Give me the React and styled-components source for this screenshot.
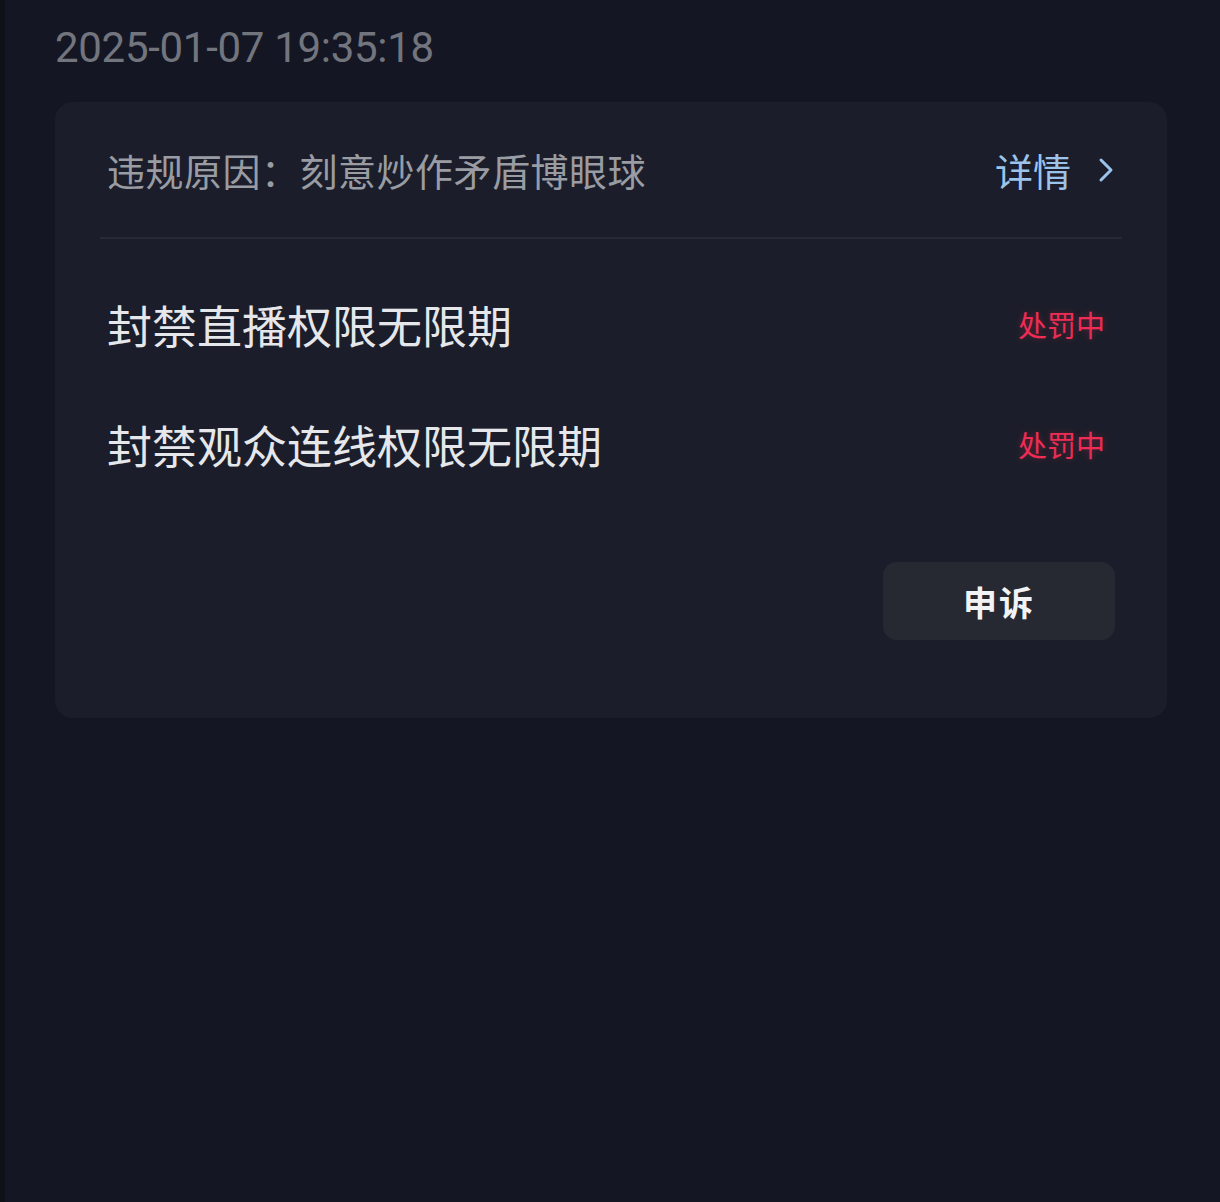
import React from "react";
import styled, { createGlobalStyle } from "styled-components";

const Global = createGlobalStyle`
  html, body { margin: 0; padding: 0; background: #141723; }
  body { font-family: "Noto Sans CJK SC", "Noto Sans", sans-serif; }
`;

const Page = styled.div`
  min-height: 1202px;
  background: #141723;
  border-left: 5px solid #0f1119;
  box-sizing: border-box;
  padding: 22px 53px 0 50px;
`;

const Time = styled.div`
  font-family: Roboto, "Liberation Sans", sans-serif;
  font-size: 42px;
  line-height: 52px;
  color: #72757e;
  letter-spacing: -0.3px;
  margin-bottom: 28px;
`;

const Card = styled.div`
  background: #1b1e2a;
  border-radius: 18px;
  padding: 0 45px 78px 45px;
  display: flex;
  flex-direction: column;
`;

const ReasonRow = styled.div`
  height: 135px;
  display: flex;
  align-items: center;
  justify-content: space-between;
  padding: 0 8px 0 7px;
  border-bottom: 2px solid #272a35;
`;

const Reason = styled.div`
  font-size: 38px;
  color: #9a9ca3;
  letter-spacing: 0.5px;
`;

const Detail = styled.div`
  display: flex;
  align-items: center;
  gap: 27px;
  font-size: 38px;
  color: #9cc3ea;
`;

const Rows = styled.div`
  display: flex;
  flex-direction: column;
  padding: 40px 17px 0 7px;
  gap: 30px;
`;

const Row = styled.div`
  height: 90px;
  display: flex;
  align-items: center;
  justify-content: space-between;
`;

const Title = styled.div`
  font-size: 45px;
  color: #e6e7ea;
`;

const Badge = styled.div`
  font-size: 29px;
  color: #ef2c53;
  font-weight: 400;
  text-shadow: 0 0 6px rgba(239, 44, 83, 0.35);
`;

const Actions = styled.div`
  display: flex;
  justify-content: flex-end;
  padding: 73px 7px 0 0;
`;

const Button = styled.button`
  width: 232px;
  height: 78px;
  border: none;
  border-radius: 14px;
  background: #262932;
  color: #f2f3f5;
  font-family: "Noto Sans CJK SC", sans-serif;
  font-size: 34px;
  font-weight: 700;
  letter-spacing: 2px;
`;

export default function App() {
  return (
    <>
      <Global />
      <Page>
        <Time>2025-01-07 19:35:18</Time>
        <Card>
          <ReasonRow>
            <Reason>违规原因：刻意炒作矛盾博眼球</Reason>
            <Detail>
              详情
              <svg width="16" height="28" viewBox="0 0 16 28" fill="none">
                <path d="M3 4 L13 14 L3 24" stroke="#9cc3ea" strokeWidth="3" strokeLinecap="round" strokeLinejoin="round" />
              </svg>
            </Detail>
          </ReasonRow>
          <Rows>
            <Row>
              <Title>封禁直播权限无限期</Title>
              <Badge>处罚中</Badge>
            </Row>
            <Row>
              <Title>封禁观众连线权限无限期</Title>
              <Badge>处罚中</Badge>
            </Row>
          </Rows>
          <Actions>
            <Button>申诉</Button>
          </Actions>
        </Card>
      </Page>
    </>
  );
}
